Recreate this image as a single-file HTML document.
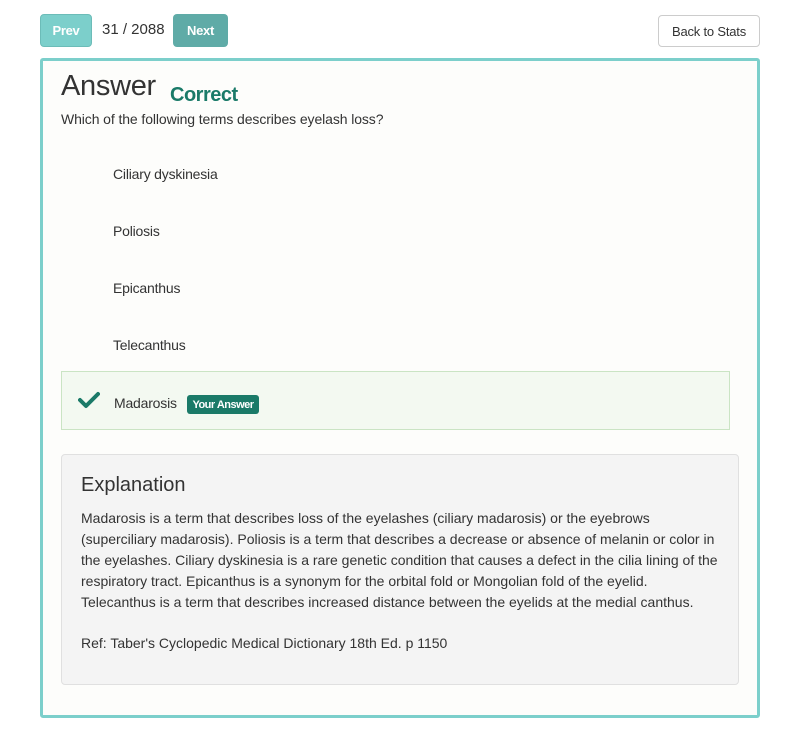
<!DOCTYPE html>
<html><head><meta charset="utf-8"><style>
*{box-sizing:border-box;margin:0;padding:0}
body{width:800px;height:742px;background:#fff;font-family:"Liberation Sans",sans-serif;color:#333;position:relative;overflow:hidden}
.abs{position:absolute}
.btn{position:absolute;border-radius:4px;color:#fff;font-weight:bold;font-size:13px;display:flex;align-items:center;justify-content:center;letter-spacing:-0.3px}
.card{position:absolute;left:40px;top:58px;width:720px;height:660px;border:3px solid #7ccfcb;border-radius:3px;background:#fdfdfb}
.opt{position:absolute;left:113px;font-size:14px;color:#333;letter-spacing:-0.2px}
.exp{position:absolute;left:61px;top:454px;width:678px;height:231px;background:#f4f4f4;border:1px solid #e0e0e0;border-radius:4px}
.p{position:absolute;left:81px;font-size:14px;line-height:21px;letter-spacing:0px;white-space:nowrap;color:#333}
</style></head><body>
<div class="btn" style="left:40px;top:14px;width:52px;height:33px;background:#7ccfcb;border:1px solid #6cbcb8">Prev</div>
<div class="abs" style="left:102px;top:21px;font-size:15px;color:#333">31 / 2088</div>
<div class="btn" style="left:173px;top:14px;width:55px;height:33px;background:#5faba7">Next</div>
<div class="abs" style="left:658px;top:15px;width:102px;height:32px;border:1px solid #ccc;border-radius:4px;font-size:13px;display:flex;align-items:center;justify-content:center;color:#333;letter-spacing:-0.2px">Back to Stats</div>
<div class="card"></div>
<div class="abs" style="left:61px;top:70px;font-size:29px;color:#333;letter-spacing:-0.3px">Answer</div>
<div class="abs" style="left:170px;top:84px;font-size:20px;font-weight:bold;color:#1a7a68;letter-spacing:-0.5px">Correct</div>
<div class="abs" style="left:61px;top:111px;font-size:14px;letter-spacing:-0.1px">Which of the following terms describes eyelash loss?</div>
<div class="opt" style="top:166px">Ciliary dyskinesia</div>
<div class="opt" style="top:223px">Poliosis</div>
<div class="opt" style="top:280px">Epicanthus</div>
<div class="opt" style="top:337px">Telecanthus</div>
<div class="abs" style="left:61px;top:371px;width:669px;height:59px;background:#f3f9f1;border:1px solid #cae4c4"></div>
<svg class="abs" style="left:78px;top:391px" width="22" height="18" viewBox="0 0 22 18"><path d="M2 9 L8 15 L20 3" stroke="#1a7a68" stroke-width="4" fill="none" stroke-linecap="round" stroke-linejoin="round"/></svg>
<div class="opt" style="left:114px;top:395px">Madarosis</div>
<div class="abs" style="left:187px;top:395px;width:72px;height:19px;background:#1a7a68;border-radius:3px;color:#fff;font-size:11px;font-weight:bold;display:flex;align-items:center;justify-content:center;letter-spacing:-0.5px">Your Answer</div>
<div class="exp"></div>
<div class="abs" style="left:81px;top:474px;font-size:20px;color:#333">Explanation</div>
<div class="p" style="top:508px">Madarosis is a term that describes loss of the eyelashes (ciliary madarosis) or the eyebrows<br>(superciliary madarosis). Poliosis is a term that describes a decrease or absence of melanin or color in<br>the eyelashes. Ciliary dyskinesia is a rare genetic condition that causes a defect in the cilia lining of the<br>respiratory tract. Epicanthus is a synonym for the orbital fold or Mongolian fold of the eyelid.<br>Telecanthus is a term that describes increased distance between the eyelids at the medial canthus.</div>
<div class="p" style="top:633px">Ref: Taber's Cyclopedic Medical Dictionary 18th Ed. p 1150</div>
</body></html>
